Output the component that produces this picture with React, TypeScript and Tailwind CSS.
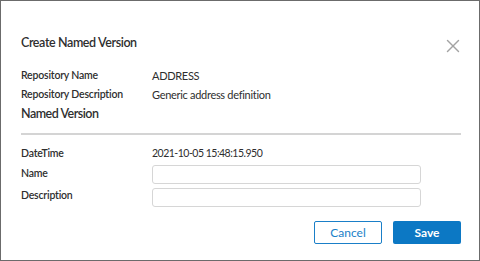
import { X } from 'lucide-react';

const font = { fontFamily: "'Lato', 'Liberation Sans', sans-serif" };

const App = () => {
  return (
    <div
      className="w-[480px] h-[261px] bg-white border border-[#6b6b6b] text-[#2e2e2e]"
      style={font}
    >
      <div className="pl-[20px] pr-[18px] pt-[33px]">
        <div className="flex items-center justify-between h-[18px]">
          <h1 className="text-[12.5px] font-semibold tracking-[-0.4px]">Create Named Version</h1>
          <button className="text-[#a3a3a3] pt-[5px] -mr-[3px]">
            <X className="w-[22px] h-[22px]" strokeWidth={1.6} />
          </button>
        </div>

        <div className="mt-[14px] grid grid-cols-[131px_1fr] text-[11px] leading-[19px]">
          <span className="font-semibold text-[10.5px] tracking-[-0.2px]">Repository Name</span>
          <span className="tracking-[-0.3px]">ADDRESS</span>
          <span className="font-semibold text-[10.5px] tracking-[-0.2px]">Repository Description</span>
          <span className="tracking-[-0.3px]">Generic address definition</span>
        </div>
        <h2 className="text-[12.5px] font-semibold leading-[19px] tracking-[-0.5px]">Named Version</h2>

        <div className="mt-[10px] h-[2px] bg-[#d4d4d4]"></div>

        <div className="mt-[9px] grid grid-cols-[131px_269px] text-[10.5px]">
          <div className="h-[19px] flex items-center font-semibold tracking-[-0.2px]">DateTime</div>
          <div className="h-[19px] flex items-center tracking-[-0.5px]">2021-10-05 15:48:15.950</div>
          <div className="mt-[2px] h-[19px] pb-[2px] flex items-center font-semibold tracking-[-0.2px]">
            Name
          </div>
          <input className="mt-[2px] h-[19px] border border-[#d6d6d6] rounded-[3px] outline-none" />
          <div className="mt-[4px] h-[19px] pb-[3px] flex items-center font-semibold tracking-[-0.2px]">
            Description
          </div>
          <input className="mt-[4px] h-[19px] border border-[#d6d6d6] rounded-[3px] outline-none" />
        </div>

        <div className="mt-[14px] flex justify-end gap-[11px]">
          <button className="w-[68px] h-[23px] border border-[#1a7fc8] rounded-[2px] text-[#1a7fc8] text-[12px]">
            Cancel
          </button>
          <button className="w-[68px] h-[23px] bg-[#0c78c4] rounded-[2px] text-white text-[12px] font-bold">
            Save
          </button>
        </div>
      </div>
    </div>
  );
};

export default App;
